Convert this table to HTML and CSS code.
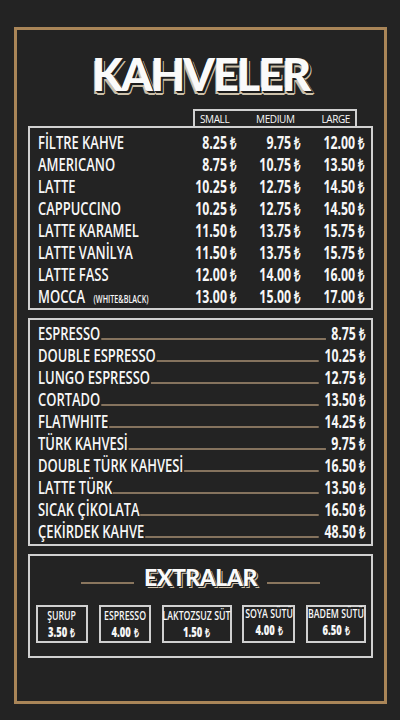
FILE: index.html
```html
<!DOCTYPE html>
<html lang="tr">
<head>
    <meta charset="UTF-8">
    <meta name="viewport" content="width=device-width, initial-scale=1.0">
    <title>Kahveler</title>
    <link rel="stylesheet" href="styles.css">
</head>
<body>
    <div class="frame">
        <h1 class="title">KAHVELER</h1>

        <!-- Size labels -->
        <div class="sizes">
            <span>SMALL</span>
            <span>MEDIUM</span>
            <span>LARGE</span>
        </div>

        <!-- Sized coffees -->
        <section class="box sized">
            <div class="condensed">
                <div class="row"><span class="name">FİLTRE KAHVE</span><span class="price">8.25<i>₺</i></span><span class="price">9.75<i>₺</i></span><span class="price">12.00<i>₺</i></span></div>
                <div class="row"><span class="name">AMERICANO</span><span class="price">8.75<i>₺</i></span><span class="price">10.75<i>₺</i></span><span class="price">13.50<i>₺</i></span></div>
                <div class="row"><span class="name">LATTE</span><span class="price">10.25<i>₺</i></span><span class="price">12.75<i>₺</i></span><span class="price">14.50<i>₺</i></span></div>
                <div class="row"><span class="name">CAPPUCCINO</span><span class="price">10.25<i>₺</i></span><span class="price">12.75<i>₺</i></span><span class="price">14.50<i>₺</i></span></div>
                <div class="row"><span class="name">LATTE KARAMEL</span><span class="price">11.50<i>₺</i></span><span class="price">13.75<i>₺</i></span><span class="price">15.75<i>₺</i></span></div>
                <div class="row"><span class="name">LATTE VANİLYA</span><span class="price">11.50<i>₺</i></span><span class="price">13.75<i>₺</i></span><span class="price">15.75<i>₺</i></span></div>
                <div class="row"><span class="name">LATTE FASS</span><span class="price">12.00<i>₺</i></span><span class="price">14.00<i>₺</i></span><span class="price">16.00<i>₺</i></span></div>
                <div class="row"><span class="name">MOCCA <small>(WHITE&amp;BLACK)</small></span><span class="price">13.00<i>₺</i></span><span class="price">15.00<i>₺</i></span><span class="price">17.00<i>₺</i></span></div>
            </div>
        </section>

        <!-- Single price coffees -->
        <section class="box list">
            <div class="condensed">
                <div class="line"><span class="name">ESPRESSO</span><span class="dots"></span><span class="price">8.75<i>₺</i></span></div>
                <div class="line"><span class="name">DOUBLE ESPRESSO</span><span class="dots"></span><span class="price">10.25<i>₺</i></span></div>
                <div class="line"><span class="name">LUNGO ESPRESSO</span><span class="dots"></span><span class="price">12.75<i>₺</i></span></div>
                <div class="line"><span class="name">CORTADO</span><span class="dots"></span><span class="price">13.50<i>₺</i></span></div>
                <div class="line"><span class="name">FLATWHITE</span><span class="dots"></span><span class="price">14.25<i>₺</i></span></div>
                <div class="line"><span class="name">TÜRK KAHVESİ</span><span class="dots"></span><span class="price">9.75<i>₺</i></span></div>
                <div class="line"><span class="name">DOUBLE TÜRK KAHVESİ</span><span class="dots"></span><span class="price">16.50<i>₺</i></span></div>
                <div class="line"><span class="name">LATTE TÜRK</span><span class="dots"></span><span class="price">13.50<i>₺</i></span></div>
                <div class="line"><span class="name">SICAK ÇİKOLATA</span><span class="dots"></span><span class="price">16.50<i>₺</i></span></div>
                <div class="line"><span class="name">ÇEKİRDEK KAHVE</span><span class="dots"></span><span class="price">48.50<i>₺</i></span></div>
            </div>
        </section>

        <!-- Extras -->
        <section class="box extras">
            <div class="extras-head">
                <span class="rule"></span>
                <h2>EXTRALAR</h2>
                <span class="rule"></span>
            </div>
            <div class="extras-list">
                <div class="extra w52"><div class="extra-text"><span>ŞURUP</span><b>3.50<i>₺</i></b></div></div>
                <div class="extra w52"><div class="extra-text"><span>ESPRESSO</span><b>4.00<i>₺</i></b></div></div>
                <div class="extra w70"><div class="extra-text"><span>LAKTOZSUZ SÜT</span><b>1.50<i>₺</i></b></div></div>
                <div class="extra w53"><div class="extra-text up"><span>SOYA SÜTÜ</span><b>4.00<i>₺</i></b></div></div>
                <div class="extra w60"><div class="extra-text up"><span>BADEM SÜTÜ</span><b>6.50<i>₺</i></b></div></div>
            </div>
        </section>
    </div>
</body>
</html>
```

FILE: styles.css
```css
* {
    box-sizing: border-box;
}

body {
    margin: 0;
    background-color: #232323;
    color: #f7f7f7;
    font-family: "Open Sans", "Liberation Sans", sans-serif;
}

/* Gold frame */
.frame {
    margin: 27px 13px 0 14px;
    height: 677px;
    border: 3px solid #a98558;
    padding: 0 11px;
    display: flex;
    flex-direction: column;
}

.title {
    margin: 22px 0 13px;
    font-family: Lato, "Liberation Sans", sans-serif;
    font-weight: 900;
    font-size: 45px;
    line-height: 44px;
    letter-spacing: -2px;
    text-align: center;
    color: #fafafa;
    text-shadow: 1px 1px 0 #1c1c1c, 2px 2px 0 #1c1c1c, 3px 3px 0 #cbbfa8, 2px 4px 0 #cbbfa8, -1px 3px 0 #cbbfa8;
}

/* Size header */
.sizes {
    margin-left: 165px;
    width: 164px;
    height: 17px;
    border: 2px solid #d0d0d0;
    border-bottom: 0;
    padding: 0 5px 0 5px;
    display: flex;
    justify-content: space-between;
    align-items: center;
    font-size: 10px;
    letter-spacing: -0.4px;
}

.box {
    border: 2px solid #d0d0d0;
}

/* Narrow type: the content is laid out wide and squeezed sideways */
.condensed {
    width: calc(100% / 0.72);
    transform: scaleX(0.72);
    transform-origin: left center;
}

.name {
    font-weight: 600;
}

/* Sized table */
.sized {
    padding: 3px 0 1px;
}

.sized .condensed {
    padding: 0 9.7px 0 11.1px;
}

.row {
    display: grid;
    grid-template-columns: 1fr 88.9px 88.9px 88.9px;
    height: 22px;
    align-items: center;
    font-size: 18px;
    line-height: 20px;
}

.row small {
    font-size: 10px;
    line-height: 10px;
    font-weight: 600;
    margin-left: 7px;
}

.price {
    text-align: right;
    font-weight: bold;
    font-size: 18px;
    white-space: nowrap;
    transform: scaleX(0.95);
    transform-origin: right center;
}

.price i,
.extra b i {
    font-style: normal;
    font-size: 0.92em;
    margin-left: 4px;
}

/* Leader list */
.list {
    margin-top: 8px;
    padding: 2px 0;
}

.list .condensed {
    padding: 0 8.3px 0 11.1px;
}

.line {
    display: flex;
    align-items: baseline;
    height: 22px;
    line-height: 22px;
    font-size: 18px;
}

.dots {
    flex: 1;
    border-bottom: 2px solid #85735e;
    margin: 0 5px 0 1px;
}

/* Extras */
.extras {
    margin-top: 8px;
    height: 104px;
    padding-top: 9px;
}

.extras-head {
    display: flex;
    justify-content: center;
    align-items: center;
    gap: 10px;
}

.extras-head h2 {
    margin: 0;
    font-family: Lato, "Liberation Sans", sans-serif;
    font-weight: 900;
    font-size: 23px;
    line-height: 24px;
    letter-spacing: -0.5px;
    color: #fafafa;
    text-shadow: 1px 1px 0 #1c1c1c, 2px 2px 0 #cbbfa8;
}

.rule {
    width: 53px;
    height: 2px;
    margin-top: 11px;
    background-color: #8a765e;
}

.extras-list {
    display: flex;
    justify-content: space-between;
    padding: 0 5px 0 6px;
    margin-top: 16px;
}

.extra {
    height: 38px;
    border: 2px solid #d0d0d0;
    display: flex;
    flex-direction: column;
    align-items: center;
    justify-content: center;
}

.extra-text {
    display: flex;
    flex-direction: column;
    align-items: center;
    font-size: 12.5px;
    font-weight: 600;
    line-height: 17px;
    white-space: nowrap;
    transform: scaleX(0.7);
}

.extra-text b {
    font-size: 13.5px;
}

.extra-text.up {
    margin-top: -5px;
}

.w52 { width: 52px; }
.w53 { width: 53px; }
.w60 { width: 60px; }
.w70 { width: 70px; }
```
